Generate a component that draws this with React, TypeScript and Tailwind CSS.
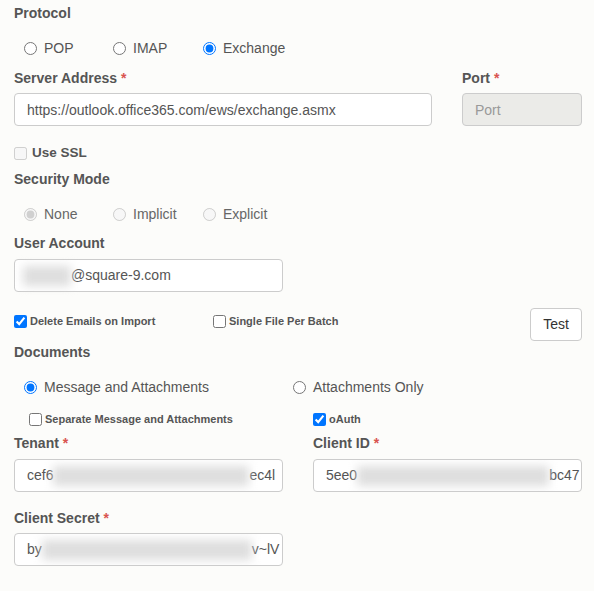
import type { ReactNode } from 'react'

function Label({ children, req, className = '' }: { children: ReactNode; req?: boolean; className?: string }) {
  return (
    <div className={`h-5 leading-5 text-[14px] font-bold text-[#555] ${className}`}>
      {children}
      {req && <span className="text-[#d9534f] ml-[4px]">*</span>}
    </div>
  )
}

function Radio({ label, checked, disabled, name, className = '' }: { label: string; checked?: boolean; disabled?: boolean; name: string; className?: string }) {
  return (
    <label className={`flex items-center h-5 ${className}`}>
      <input type="radio" name={name} defaultChecked={checked} disabled={disabled} className="m-0 w-[13px] h-[13px]" />
      <span className={`ml-[7px] text-[14px] ${disabled ? 'text-[#666]' : 'text-[#555]'}`}>{label}</span>
    </label>
  )
}

function Check({ label, checked, disabled, big, className = '' }: { label: string; checked?: boolean; disabled?: boolean; big?: boolean; className?: string }) {
  return (
    <label className={`flex items-center ${className}`}>
      <input type="checkbox" defaultChecked={checked} disabled={disabled} className="m-0 w-[13px] h-[13px]" />
      <span className={`font-bold text-[#555] ${big ? 'ml-[5px] text-[13.5px]' : 'ml-[3px] text-[11px]'}`}>{label}</span>
    </label>
  )
}

function Blur({ w }: { w: number }) {
  return <span className="inline-block h-[20px] bg-[#dedede] blur-[5px] shrink-0" style={{ width: w }} />
}

function Masked({ head, tail, blur, className = '' }: { head: string; tail: string; blur: number; className?: string }) {
  return (
    <div className={`h-[33px] border border-[#ccc] rounded-[4px] bg-white flex items-center pl-[12px] overflow-hidden whitespace-nowrap text-[14px] text-[#555] ${className}`}>
      <span>{head}</span>
      <Blur w={blur} />
      <span>{tail}</span>
    </div>
  )
}

export default function App() {
  return (
    <div className="w-[594px] h-[591px] bg-[#fcfcfa] pl-[14px] pr-[12px] pt-[3px] font-['Liberation_Sans',Arial,sans-serif] text-[#555]">
      <Label>Protocol</Label>
      <div className="flex mt-[15px] pl-[10px]">
        <Radio name="proto" label="POP" className="w-[89px]" />
        <Radio name="proto" label="IMAP" className="w-[90px]" />
        <Radio name="proto" label="Exchange" checked />
      </div>

      <div className="flex mt-[10px] gap-[30px]">
        <div className="w-[418px]">
          <Label req>Server Address</Label>
          <input
            readOnly
            value="https://outlook.office365.com/ews/exchange.asmx"
            className="mt-[5px] w-full h-[33px] border border-[#ccc] rounded-[4px] bg-white px-[12px] text-[14px] text-[#555] outline-none"
          />
        </div>
        <div className="w-[120px]">
          <Label req>Port</Label>
          <input
            disabled
            placeholder="Port"
            className="mt-[5px] w-full h-[33px] border border-[#ccc] rounded-[4px] bg-[#ebebe8] px-[12px] text-[14px] placeholder:text-[#999] outline-none"
          />
        </div>
      </div>

      <Check label="Use SSL" disabled big className="mt-[17px] h-5" />

      <Label className="mt-[6px]">Security Mode</Label>
      <div className="flex mt-[15px] pl-[10px]">
        <Radio name="sec" label="None" checked disabled className="w-[89px]" />
        <Radio name="sec" label="Implicit" disabled className="w-[90px]" />
        <Radio name="sec" label="Explicit" disabled />
      </div>

      <Label className="mt-[9px]">User Account</Label>
      <div className="mt-[6px] w-[269px] h-[33px] border border-[#ccc] rounded-[4px] bg-white flex items-center pl-[8px] text-[14px] text-[#555]">
        <Blur w={48} />
        <span>@square-9.com</span>
      </div>

      <div className="flex items-start mt-[16px] h-[33px]">
        <Check label="Delete Emails on Import" checked className="mt-[5px] w-[199px]" />
        <Check label="Single File Per Batch" className="mt-[5px]" />
        <button type="button" className="ml-auto w-[52px] h-[33px] border border-[#ccc] rounded-[4px] bg-white text-[14px] text-[#333]">
          Test
        </button>
      </div>

      <Label className="mt-[1px]">Documents</Label>
      <div className="flex mt-[15px] pl-[10px]">
        <Radio name="docs" label="Message and Attachments" checked className="w-[269px]" />
        <Radio name="docs" label="Attachments Only" />
      </div>

      <div className="flex mt-[12px] h-5">
        <Check label="Separate Message and Attachments" className="ml-[15px] w-[284px]" />
        <Check label="oAuth" checked />
      </div>

      <div className="flex mt-[4px] gap-[30px]">
        <div className="w-[269px]">
          <Label req>Tenant</Label>
          <Masked head="cef6" tail="ec4l" blur={196} className="mt-[6px]" />
          <Label req className="mt-[16px]">Client Secret</Label>
          <Masked head="by" tail="v~lV" blur={210} className="mt-[5px]" />
        </div>
        <div className="w-[269px]">
          <Label req>Client ID</Label>
          <Masked head="5ee0" tail="bc47" blur={192} className="mt-[6px]" />
        </div>
      </div>
    </div>
  )
}
